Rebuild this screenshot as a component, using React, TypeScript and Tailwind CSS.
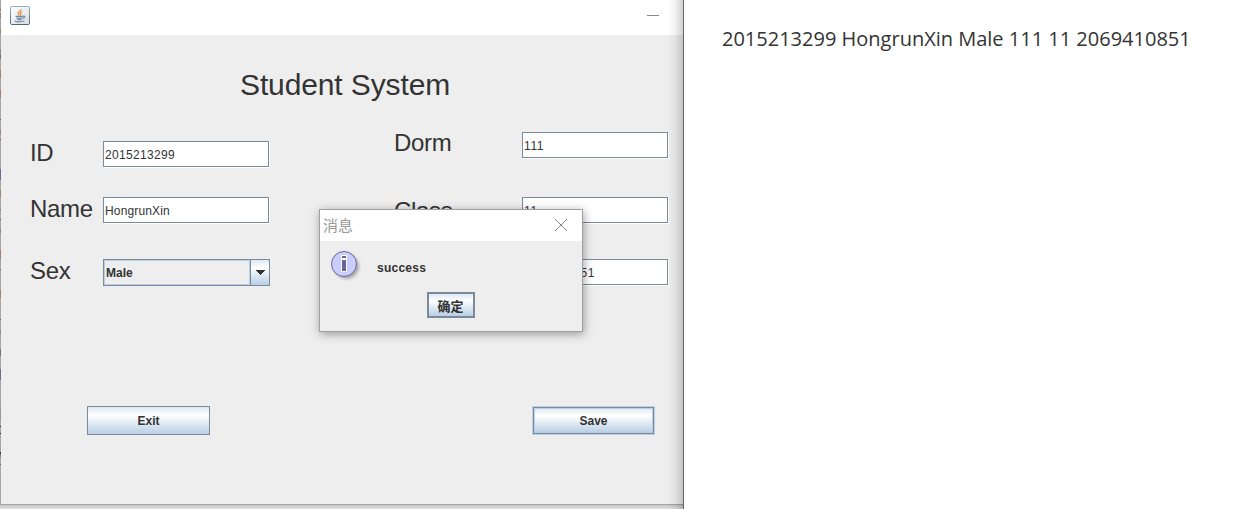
import type { ReactNode } from "react";

function Label({ children, className = "" }: { children: ReactNode; className?: string }) {
  return <span className={`h-[26px] shrink-0 whitespace-nowrap text-2xl tracking-[-0.3px] text-[#333] ${className}`}>{children}</span>;
}

function Field({ value, className = "" }: { value: string; className?: string }) {
  return (
    <div className={`flex h-[26px] shrink-0 items-center border border-[#7a8a99] bg-white pt-px pl-px text-xs text-[#333] shadow-[1px_1px_0_#fff] ${className}`}>
      <span>{value}</span>
    </div>
  );
}

function JavaIcon() {
  return (
    <svg width="20" height="19" viewBox="0 0 20 19" fill="none">
      <defs>
        <linearGradient id="jf" x1="0" y1="0" x2="0" y2="1">
          <stop offset="0" stopColor="#91b0c5" />
          <stop offset="1" stopColor="#4b687d" />
        </linearGradient>
        <linearGradient id="jb" x1="0" y1="0" x2="1" y2="1">
          <stop offset="0" stopColor="#fff" />
          <stop offset="1" stopColor="#dcdcdc" />
        </linearGradient>
      </defs>
      <rect x=".5" y=".5" width="19" height="18" rx="1.3" fill="url(#jb)" stroke="url(#jf)" />
      <path d="M10.9 3.2c.6 1.6-3.4 2.5-2.8 4.4.2.8.8 1.2 1 1.8M12.2 5.9c-1.4.5-2.3 1.2-1.7 2.1.4.6.3 1.1-.3 1.6" stroke="#ed9148" strokeWidth="1.4" />
      <path d="M5.5 10.3h8.2M6.3 12.1h6.4M7.4 13.6h4.3M13.2 10c2.4-.4 1.8 1.9-.2 2.3M4.6 15.1c2.5 1 7.8.9 9.8-.1" stroke="#6f8da5" strokeWidth="1.15" />
    </svg>
  );
}

function InfoIcon() {
  return (
    <svg width="32" height="32" viewBox="0 0 32 32" className="shrink-0">
      <defs>
        <filter id="is" x="-20%" y="-20%" width="150%" height="150%">
          <feGaussianBlur stdDeviation="1.5" />
        </filter>
      </defs>
      <circle cx="15.5" cy="15.5" r="12.5" fill="#888" opacity=".65" filter="url(#is)" />
      <circle cx="13" cy="13" r="12.5" fill="#ccf" stroke="#669" />
      <path d="M10 4h6v17h-6z" fill="#fff" />
      <path d="M11 5h4v2h-4zM11 9h4v11h-4z" fill="#669" />
    </svg>
  );
}

/* Slivers of the window behind, visible along the left edge. */
const specks: [number, number, string][] = [
  [9, 1, "#666"], [13, 5, "#a08270"], [29, 5, "#a08270"], [49, 4, "#a08270"], [54, 5, "#73757d"],
  [70, 8, "#a08270"], [90, 8, "#a08270"], [119, 1, "#666"], [130, 5, "#a08270"], [139, 1, "#666"],
  [169, 11, "#716b8a"], [190, 7, "#a08270"], [209, 1, "#666"], [219, 1, "#666"], [229, 4, "#a08270"],
  [250, 9, "#a08270"], [269, 1, "#666"], [290, 8, "#a08270"], [319, 1, "#666"], [330, 4, "#a08270"],
  [349, 7, "#73757d"], [369, 11, "#716b8a"], [407, 13, "#9296a5"], [426, 1, "#222"], [433, 1, "#222"],
  [452, 2, "#29386b"], [454, 3, "#aa7848"], [464, 1, "#666"],
];

function EdgeSpecks() {
  return (
    <svg className="pointer-events-none absolute top-0 left-0" width="1" height="509" shapeRendering="crispEdges">
      {specks.map(([y, h, fill]) => (
        <rect key={y} x="0" y={y} width="1" height={h} fill={fill} />
      ))}
    </svg>
  );
}

function Dialog() {
  return (
    <div className="absolute top-[209px] left-[319px] flex h-[123px] w-[264px] flex-col border border-[#a0a0a0] bg-[#eee] shadow-[1px_2px_9px_rgba(0,0,0,0.36)]">
      <div className="flex h-[31px] shrink-0 items-start justify-between bg-white pr-[15px] pl-[3px]">
        <span className="font-['Noto_Sans_CJK_SC',sans-serif] text-[15px] leading-[29px] text-[#999]">消息</span>
        <svg width="12" height="12" viewBox="0 0 12 12" stroke="#888" strokeWidth="1" className="mt-[9px]">
          <path d="M0 0l12 12M12 0L0 12" />
        </svg>
      </div>
      <div className="flex pt-[10px] pl-[11px]">
        <InfoIcon />
        <span className="pt-[9px] pl-[14px] text-xs leading-4 font-bold tracking-[0.25px] text-[#333]">success</span>
      </div>
      <button className="mt-[9px] ml-[107px] flex h-[26px] w-12 shrink-0 items-center justify-center border-2 border-[#7a8a99] bg-linear-to-b from-[#dde8f3] via-white via-30% to-[#b8cfe5] pr-px font-['Noto_Sans_CJK_SC',sans-serif] text-[13px] leading-none font-bold text-[#333]">
        确定
      </button>
    </div>
  );
}

export default function App() {
  return (
    <div className="relative flex h-[509px] w-[1239px] overflow-hidden bg-white font-['Liberation_Sans',Arial,sans-serif]">
      <div className="flex h-[509px] w-[684px] shrink-0 flex-col border-r border-[#666]">
        <div className="flex h-[505px] shrink-0 flex-col border-b border-l border-[#a5a5a5] bg-[#eee]">
          <header className="flex h-[35px] shrink-0 items-start justify-between bg-white pt-[6px] pr-6 pl-[9px]">
            <JavaIcon />
            <div className="mt-[9px] h-px w-3 bg-[#888]" />
          </header>
          <h1 className="mt-[33px] ml-[239px] h-[33px] shrink-0 text-[30px] leading-[34px] tracking-[-0.12px] text-[#333]">Student System</h1>
          <div className="flex h-[305px] shrink-0">
            <div className="flex w-[364px] flex-col pt-10 pl-[29px]">
              <div className="flex">
                <Label className="w-[73px] leading-6">ID</Label>
                <Field value="2015213299" className="w-[166px] tracking-[0.33px]" />
              </div>
              <div className="mt-[30px] flex">
                <Label className="w-[73px] leading-6">Name</Label>
                <Field value="HongrunXin" className="w-[166px] tracking-[0.15px]" />
              </div>
              <div className="mt-9 flex">
                <Label className="w-[73px] leading-6">Sex</Label>
                <div className="flex h-[27px] w-[167px] border border-[#7a8a99] text-xs font-bold text-[#333]">
                  <div className="flex flex-1 items-center border border-[#b8cfe5] pl-px">Male</div>
                  <div className="flex w-[19px] items-center border-l border-[#7a8a99] bg-linear-to-b from-[#dde8f3] via-white via-30% to-[#b8cfe5] pl-1">
                    <svg width="10" height="5" viewBox="0 0 10 5" fill="#333" shapeRendering="crispEdges">
                      <path d="M0 0h10L5 5z" />
                    </svg>
                  </div>
                </div>
              </div>
            </div>
            <div className="flex flex-col pt-[31px] pl-[29px]">
              <div className="flex">
                <Label className="w-32 leading-[22px]">Dorm</Label>
                <Field value="111" className="w-[146px] pl-[2px] tracking-[0.6px]" />
              </div>
              <div className="mt-[39px] flex">
                <Label className="w-32 leading-7">Class</Label>
                <Field value="11" className="w-[146px] pl-[2px] tracking-[0.6px]" />
              </div>
              <div className="mt-9 flex pl-32">
                <Field value="2069410851" className="w-[146px] tracking-[0.4px]" />
              </div>
            </div>
          </div>
          <div className="flex h-[29px] shrink-0 justify-between pr-[28px] pl-[86px] text-xs font-bold text-[#333]">
            <button className="w-[123px] border border-[#7a8a99] bg-linear-to-b from-[#dde8f3] via-white via-30% to-[#b8cfe5]">Exit</button>
            <div className="flex w-[123px] border border-[#b8cfe5]">
              <button className="flex-1 border border-[#7a8a99] bg-linear-to-b from-[#dde8f3] via-white via-30% to-[#b8cfe5] shadow-[inset_0_0_0_1px_#b8cfe5]">Save</button>
            </div>
          </div>
        </div>
        <div className="h-1 bg-linear-to-b from-[#c4c4c4] to-[#e2e2e2]" />
      </div>
      <main className="flex-1 bg-white pt-[25px] pl-[38px] font-['Open_Sans',sans-serif] text-[20px] leading-7 text-[#333]">
        2015213299 HongrunXin Male 111 11 2069410851
      </main>
      <div className="pointer-events-none absolute top-0 left-[667px] h-[509px] w-4 bg-linear-to-r from-transparent via-black/5 to-black/18" />
      <EdgeSpecks />
      <Dialog />
    </div>
  );
}
